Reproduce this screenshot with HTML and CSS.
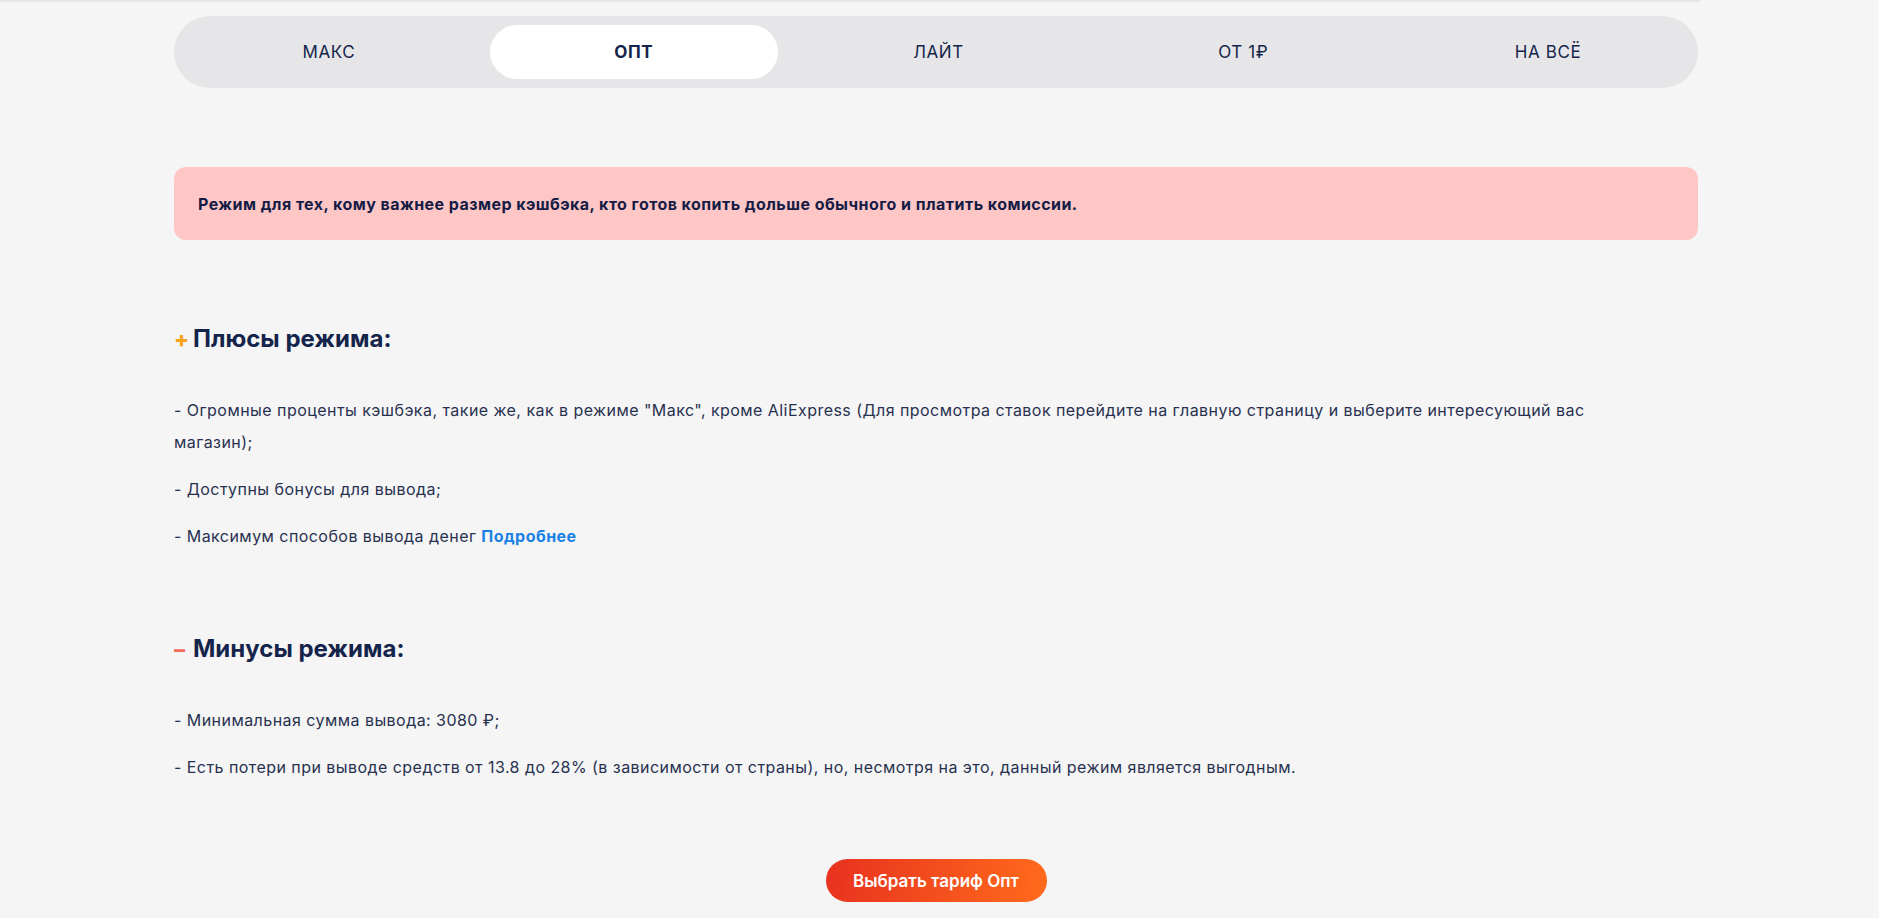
FILE: index.html
```html
<!DOCTYPE html>
<html lang="ru">
<head>
    <meta charset="UTF-8">
    <meta name="viewport" content="width=device-width, initial-scale=1.0">
    <title>Тариф Опт</title>
    <link rel="stylesheet" href="styles.css">
</head>
<body>
    <div class="topline"></div>

    <main class="tariffs">
        <nav class="tabs">
            <a class="tab" href="#">Макс</a>
            <a class="tab active" href="#">Опт</a>
            <a class="tab" href="#">Лайт</a>
            <a class="tab" href="#">От 1₽</a>
            <a class="tab" href="#">На всё</a>
        </nav>

        <div class="notice">
            Режим для тех, кому важнее размер кэшбэка, кто готов копить дольше обычного и платить комиссии.
        </div>

        <section class="block">
            <h3><span class="sign plus">+</span>Плюсы режима:</h3>
            <p>- Огромные проценты кэшбэка, такие же, как в режиме "Макс", кроме AliExpress (Для просмотра ставок перейдите на главную страницу и выберите интересующий вас магазин);</p>
            <p>- Доступны бонусы для вывода;</p>
            <p>- Максимум способов вывода денег <a href="#" class="more">Подробнее</a></p>
        </section>

        <section class="block">
            <h3><span class="sign minus">–</span>Минусы режима:</h3>
            <p>- Минимальная сумма вывода: 3080 ₽;</p>
            <p>- Есть потери при выводе средств от 13.8 до 28% (в зависимости от страны), но, несмотря на это, данный режим является выгодным.</p>
        </section>

        <div class="actions">
            <a href="#" class="btn">Выбрать тариф Опт</a>
        </div>
    </main>
</body>
</html>
```

FILE: styles.css
```css
:root {
    --navy: #14244b;
    --text: #283150;
    --bg: #f5f5f5;
}
* {
    box-sizing: border-box;
}
body {
    margin: 0;
    background: var(--bg);
    font-family: Inter, 'Noto Sans', sans-serif;
    color: var(--text);
}
.topline {
    width: 1700px;
    height: 2px;
    background: #e5e5e5;
}
.tariffs {
    width: 1524px;
    margin: 14px 181px 0 174px;
}

/* tariff switcher */
.tabs {
    display: grid;
    grid-template-columns: repeat(5, 1fr);
    column-gap: 17px;
    padding: 9px 6px 9px 11px;
    background: #e6e6e8;
    border-radius: 37px;
}
.tab {
    height: 54px;
    display: flex;
    align-items: center;
    justify-content: center;
    border-radius: 27px;
    color: var(--navy);
    text-decoration: none;
    text-transform: uppercase;
    font-size: 17px;
    letter-spacing: 0.6px;
}
.tab.active {
    background: #fff;
    font-weight: 700;
}

.notice {
    margin-top: 79px;
    height: 73px;
    display: flex;
    align-items: center;
    padding: 0 24px;
    background: #ffc6c6;
    border-radius: 12px;
    color: #141c45;
    font-size: 16px;
    font-weight: 700;
    letter-spacing: 0.45px;
}

/* pros / cons */
.block {
    margin-top: 84px;
}
.block + .block {
    margin-top: 82px;
}
.block h3 {
    margin: 0 0 40px;
    font-size: 24px;
    font-weight: 700;
    color: var(--navy);
    line-height: 30px;
}
.sign {
    display: inline-block;
    width: 19px;
    font-size: 22px;
    font-weight: 800;
}
.plus {
    color: #f7a21b;
}
.minus {
    color: #f26b5b;
}
.block p {
    max-width: 1480px;
    margin: 0 0 15px;
    font-size: 16px;
    line-height: 32px;
    letter-spacing: 0.45px;
}
.more {
    color: #1a82e6;
    font-weight: 700;
    text-decoration: none;
}

.actions {
    margin-top: 76px;
    display: flex;
    justify-content: center;
}
.btn {
    width: 221px;
    height: 43px;
    display: flex;
    align-items: center;
    justify-content: center;
    border-radius: 22px;
    background: linear-gradient(100deg, #e8311f, #ff6b1c);
    color: #fff;
    font-size: 17px;
    font-weight: 600;
    text-decoration: none;
}
```
